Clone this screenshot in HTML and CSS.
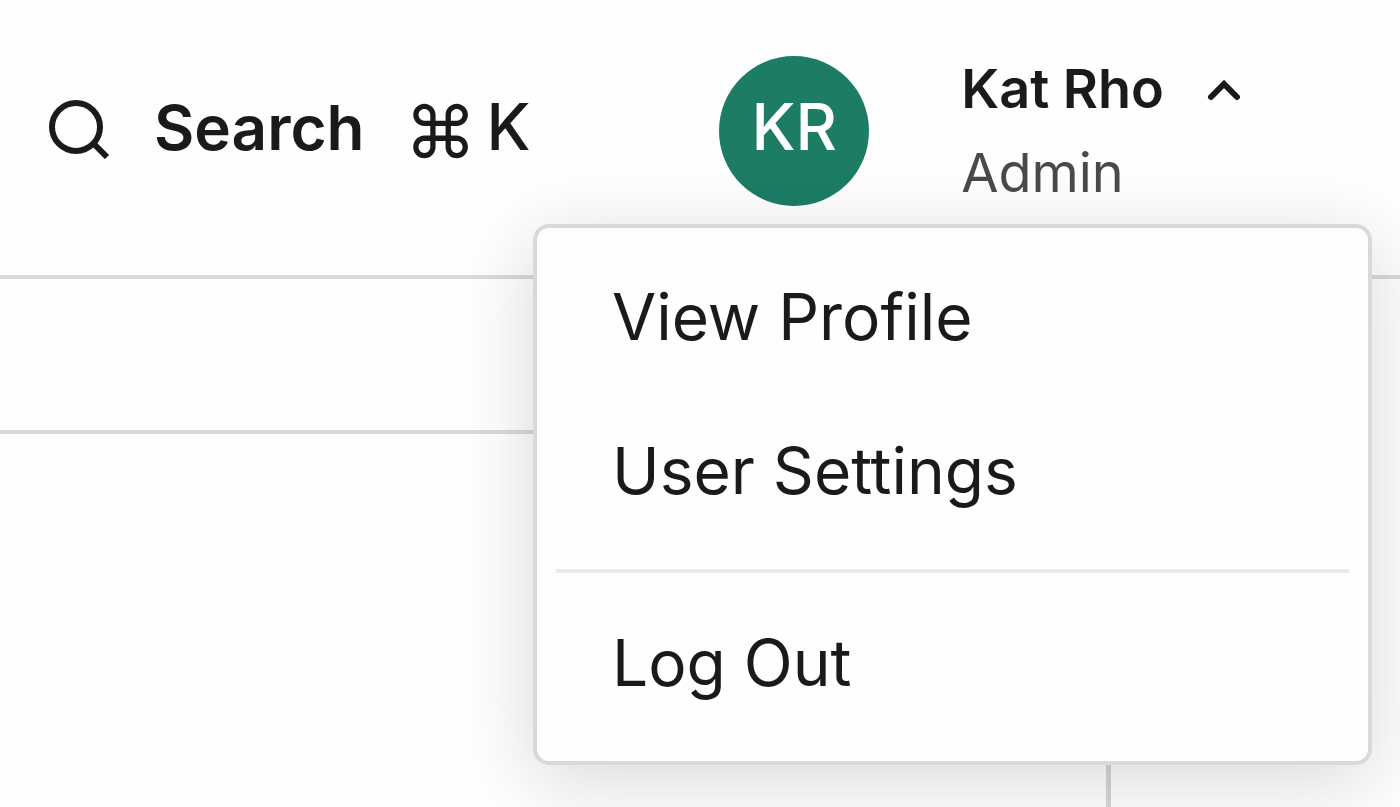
FILE: index.html
```html
<!DOCTYPE html>
<html lang="en">
<head>
    <meta charset="UTF-8">
    <title>Kat Rho</title>
    <link rel="stylesheet" href="styles.css">
</head>
<body>
<header class="header">
    <button type="button" class="search">
        <svg class="search-icon" viewBox="0 0 64 64" aria-hidden="true">
            <circle cx="29" cy="32" r="24"/>
            <path d="M45 47L60 62"/>
        </svg>
        <span class="search-label">Search</span>
        <span class="shortcut"><span class="cmd">⌘</span><span>K</span></span>
    </button>
    <div class="user">
        <button type="button" class="user-btn" aria-haspopup="true" aria-expanded="true">
            <span class="avatar">KR</span>
            <span class="user-info">
                <span class="user-name">Kat Rho
                    <svg class="arrow" viewBox="0 0 36 24" aria-hidden="true">
                        <path d="M5 20L18 7L31 20"/>
                    </svg>
                </span>
                <span class="user-role">Admin</span>
            </span>
        </button>
        <nav class="menu">
            <a class="menu-item" href="#">View Profile</a>
            <a class="menu-item" href="#">User Settings</a>
            <hr class="divider">
            <a class="menu-item" href="#">Log Out</a>
        </nav>
    </div>
</header>
<main class="content">
    <div class="content-main">
        <div class="toolbar"></div>
    </div>
    <aside class="content-side"></aside>
</main>
</body>
</html>
```

FILE: styles.css
```css
* {
    box-sizing: border-box;
}
body {
    display: flex;
    flex-direction: column;
    min-height: 100vh;
    margin: 0;
    background-color: #fefefe;
    color: #1a1a1a;
    font-family: Inter, "Liberation Sans", sans-serif;
    font-size: 64px;
}
button {
    padding: 0;
    border: none;
    background: none;
    color: inherit;
    font: inherit;
    cursor: pointer;
}
svg {
    fill: none;
    stroke: #1a1a1a;
}

/* top bar */
.header {
    display: flex;
    justify-content: space-between;
    align-items: center;
    padding: 47px 28px 60px 47px;
    border-bottom: 4px solid #d9d9d9;
}
.search {
    display: flex;
    align-items: center;
    padding-bottom: 8px;
}
.search-icon {
    width: 64px;
    height: 64px;
    margin-right: 43px;
    stroke-width: 6;
}
.search-label {
    font-size: 62px;
    font-weight: 600;
}
.shortcut {
    display: flex;
    align-items: flex-start;
    gap: 10px;
    margin-left: 40px;
    padding-top: 8px;
    line-height: 80px;
    font-weight: 500;
}
.cmd {
    font-size: 72px;
    font-weight: 400;
    line-height: 88px;
}

/* user */
.user {
    position: relative;
    padding-right: 130px;
}
.user-btn {
    display: flex;
    align-items: center;
    gap: 92px;
    text-align: left;
}
.avatar {
    display: flex;
    justify-content: center;
    align-items: center;
    width: 150px;
    height: 150px;
    padding-bottom: 10px;
    border-radius: 50%;
    background-color: #1c7c64;
    color: #fff;
    font-weight: 500;
}
.user-info {
    display: flex;
    flex-direction: column;
    font-size: 54px;
    line-height: 84px;
}
.user-name {
    display: flex;
    align-items: center;
    gap: 42px;
    font-weight: 600;
}
.user-role {
    color: #4a4a4a;
}
.arrow {
    width: 36px;
    height: 24px;
    stroke-width: 6;
    stroke-linecap: round;
}

/* dropdown */
.menu {
    position: absolute;
    top: calc(100% + 9px);
    right: 0;
    width: 839px;
    padding: 12px 0 21px;
    border: 4px solid #d9d9d9;
    border-radius: 16px;
    background-color: #fefefe;
    box-shadow: 0 16px 80px rgba(0, 0, 0, 0.15);
}
.menu-item {
    display: block;
    padding: 0 75px;
    color: inherit;
    line-height: 154px;
    text-decoration: none;
}
.divider {
    height: 4px;
    margin: 21px 19px 13px;
    border: none;
    background-color: #e9e9e9;
}

/* page */
.content {
    display: flex;
    flex: 1;
}
.content-main {
    flex: 1;
}
.toolbar {
    height: 155px;
    border-bottom: 4px solid #d9d9d9;
}
.content-side {
    width: 294px;
    border-left: 5px solid #d6d6d6;
}
```
